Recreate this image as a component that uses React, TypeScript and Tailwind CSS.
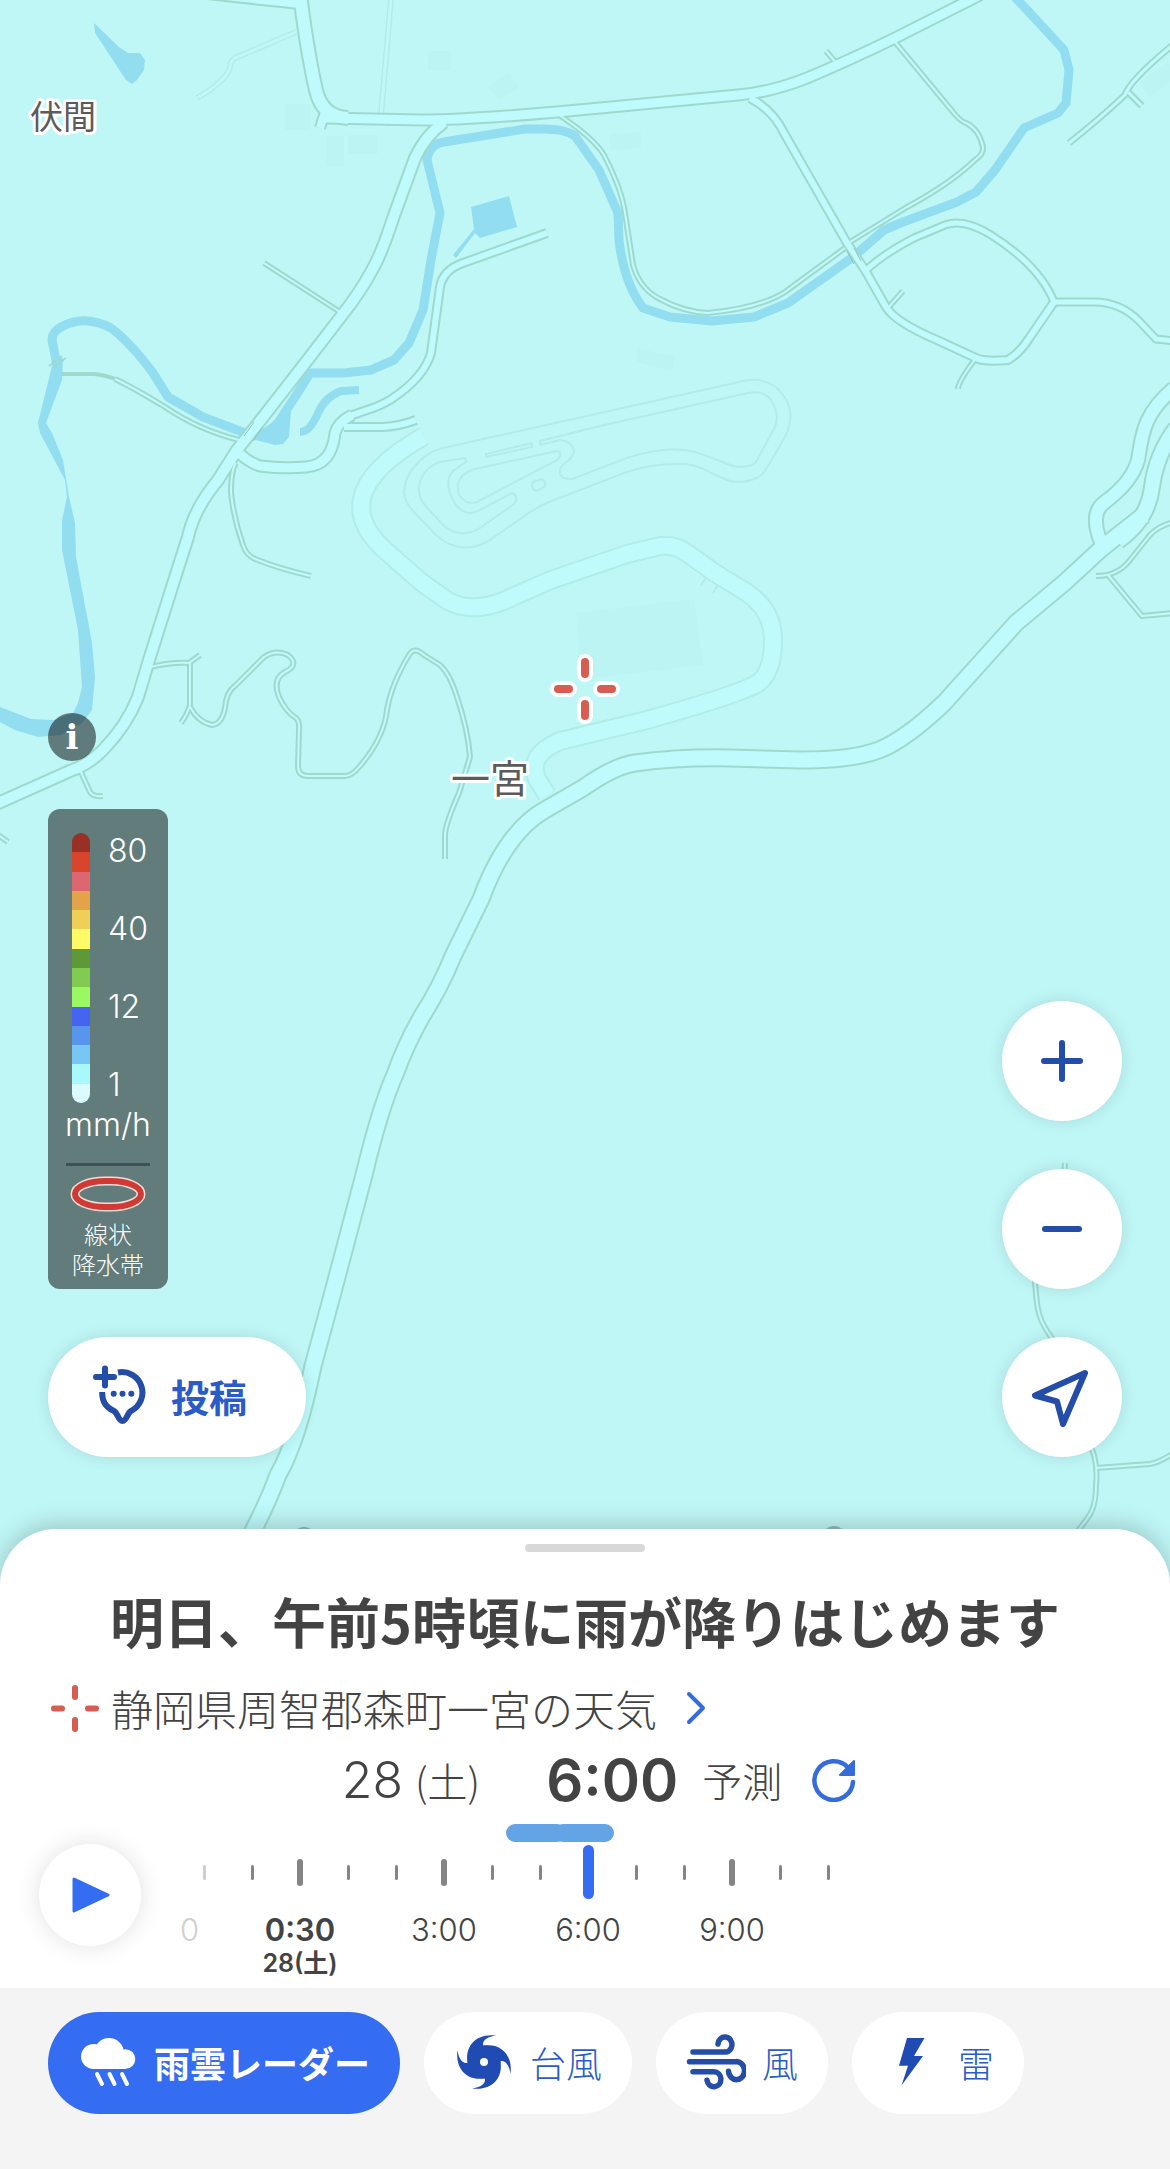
import React, { useState } from 'react';
import clsx from 'clsx';

type Road = { d: string; outer: number; inner: number };

const roads: Road[] = [
  { d: 'M180 -9 L262 0 L300 4', outer: 12, inner: 8 },
  { d: 'M300 -6 C304 26 309 60 316 90 Q322 117 348 118', outer: 16, inner: 12 },
  { d: 'M325 112 L320 128', outer: 12, inner: 8 },
  { d: 'M326 118 L421 120 Q475 120 600 108 L738 95 Q772 92 807 78 Q850 60 895 38 L980 -5', outer: 13, inner: 9 },
  { d: 'M444 122 Q425 136 415 158 L396 210 C388 232 383 252 371 272 Q360 292 346 310 L306 362 L260 421 L237 450 L218 480 Q194 509 188 537 L172 587 L149 660 L138 697 Q127 725 103 750 Q88 765 70 771 L-4 804', outer: 14, inner: 10 },
  { d: 'M547 233 L463 263 Q443 270 440 287 L431 353 Q424 378 390 400 Q380 406 367 410 L344 418', outer: 10, inner: 6 },
  { d: 'M352 415 Q338 422 335 433 Q332 465 306 467 Q283 469 260 466 Q250 463 240 454', outer: 13, inner: 9 },
  { d: 'M344 427 L383 427 Q400 426 416 420', outer: 10, inner: 6 },
  { d: 'M750 98 Q773 110 784 133 L847 243 L865 270 L886 307 Q895 322 937 340 L976 358 Q984 362 1008 360 Q1020 353 1030 337 L1054 302', outer: 10, inner: 6 },
  { d: 'M866 270 Q885 253 914 238 L945 225 Q964 218 991 235 Q1040 266 1054 302 L1094 302 Q1121 302 1140 322 L1156 339 L1174 341', outer: 9, inner: 5 },
  { d: 'M1069 143 Q1096 122 1125 95 Q1130 80 1174 44', outer: 7, inner: 3 },
  { d: 'M1128 92 L1142 106', outer: 7, inner: 3 },
  { d: 'M250 1537 Q268 1502 278 1475 Q298 1440 313 1366 L333 1292 L364 1175 Q380 1108 396 1072 Q406 1044 422 1016 Q440 988 454 954 L481 899 Q505 834 543 811 L583 788 Q614 766 635 763 Q680 757 730 758 L800 760 Q853 760 879 750 Q905 740 944 703 L1016 623 L1064 583 L1102 548 L1144 515', outer: 19, inner: 15 },
  { d: 'M1106 553 C1094 530 1091 512 1105 502 Q1132 482 1138 460 C1142 437 1142 415 1174 388', outer: 16, inner: 12 },
  { d: 'M1118 541 Q1148 520 1152 487 Q1156 455 1176 428', outer: 18, inner: 14 },
];

const lanes: string[] = [
  'M264 263 L340 312',
  'M115 379 Q134 388 165 407 Q199 430 239 440',
  'M236 463 Q231 470 231 493 Q234 520 243 545 Q246 555 255 559 Q280 569 311 576',
  'M556 113 Q593 137 604 155 Q622 190 625 213 L633 265 Q640 290 662 300 Q684 312 708 313 Q760 308 785 292 L845 248',
  'M850 242 L907 207 Q950 184 975 160 Q984 154 983 147 Q979 129 966 123 Q960 121 953 112 L895 42',
  'M888 308 L903 291',
  'M976 358 Q958 382 958 389',
  'M838 65 L826 51',
  'M1096 576 Q1118 576 1130 560 L1150 535 Q1158 526 1174 522',
  'M1108 575 L1142 616 L1174 613',
  'M147 668 Q170 662 189 663 L200 655',
  'M190 663 L190 705 Q187 715 181 723',
  'M190 707 Q198 722 212 725 Q222 724 225 708 Q226 692 236 685 L264 657 Q276 649 288 655 Q300 665 285 672 Q272 679 279 697 Q286 712 296 718 Q300 722 299 730 L298 766 Q298 776 308 776 L345 776 Q352 776 360 766 Q384 738 387 710 Q391 685 409 655 Q414 646 424 655 L440 665 Q450 674 457 697 Q468 730 470 757 L459 793 Q445 825 445 835 L445 859',
  'M80 770 L90 792 Q93 797 103 796',
  'M-3 834 L8 842',
  'M1065 1163 L1064 1180',
  'M1034 1270 L1035 1282 C1037 1308 1037 1320 1055 1342',
  'M1085 1435 L1092 1449 Q1098 1465 1096 1485 C1096 1510 1090 1516 1076 1533',
  'M1096 1468 L1150 1464 Q1158 1463 1174 1453',
];

const faintLanes: string[] = [
  'M296 32 L235 58 Q230 61 230 68 Q225 82 197 98',
  'M391 -2 L386 57 L381 115',
];

const circuitOuter =
  'M424 436 C345 481 350 520 387 552 L421 582 L448 601 Q470 613 501 602 L551 580 L627 554 L660 546 Q675 544 687 553 L715 573 L746 592 Q773 610 773 640 Q773 672 758 683 Q743 693 647 720 L560 741 Q527 755 537 779 L547 795';

const circuitEdges: string[] = [
  'M600 413 L443 448 C420 454 404 475 404 493 Q405 502 413 511 L436 535 Q459 556 487 542 L520 519 Q540 504 562 497 L624 473 Q650 463 685 464 Q697 465 711 473 L727 480 Q742 485 759 477 Q764 474 768 466 L786 435 Q796 412 783 395 Q772 378 748 380z',
  'M600 426 L748 393 Q764 390 771 400 Q780 414 775 427 L757 460 Q754 466 748 466 Q736 469 723 462 L696 452 Q665 445 627 458 L572 479 Q563 480 560 474 Q559 468 564 464 Q574 457 574 451 Q572 441 560 440 L540 445 L540 441z',
  'M465 458 L440 462 C425 467 418 480 419 492 Q420 499 424 504 L443 525 Q460 540 480 528 L514 504 Q520 497 512 493 L478 511 Q466 517 456 505 Q442 483 453 471 L466 462z',
  'M475 469 L557 451 Q564 453 557 460 L477 502 Q467 506 459 495 Q453 476 475 469z',
  'M486 454 L532 443 L532 447 L486 457z',
  'M533 482 L541 479 Q548 482 544 487 L537 491 Q530 489 533 482z',
];

const legendColors = [
  'bg-[#9a3025]', 'bg-[#d8452c]', 'bg-[#dc6770]', 'bg-[#e3a348]', 'bg-[#efcf57]',
  'bg-[#fffb66]', 'bg-[#5d9a37]', 'bg-[#80cb50]', 'bg-[#9bf863]', 'bg-[#4564ef]',
  'bg-[#5896ee]', 'bg-[#78c6f4]', 'bg-[#a9f8fb]', 'bg-[#dcfbfe]',
];

const RadarMap: React.FC = () => (
  <svg
    className="absolute inset-x-0 top-0 h-[calc(100%+61px)] w-full"
    viewBox="0 0 1170 1590"
    preserveAspectRatio="xMidYMin slice"
    fill="none"
    aria-hidden="true"
  >
    <rect x="-600" width="2400" height="1590" fill="#bff7f6" />

    {/* buildings */}
    <g fill="#bbf4f2">
      <path d="M285 104h25v26h-25zM326 136h18v30h-18zM348 135h30v19h-30zM428 51h23v19h-23zM488 87l21-14 10 14-20 13zM610 134l31-2v16l-31 2zM637 348l38 9-3 14-35-9zM1140 82l25-18 5 0v18l-20 15z" />
      <path d="M576 613l118-14 9 66-120 14z" />
    </g>

    {/* water */}
    <g fill="#92ddf0">
      <path d="M94 23L119 47 128 53 140 53 145 60 144 70 137 80 132 84 126 80 95 33z" />
      <path d="M471 207L509 196 517 227 480 238 475 233 456 258 453 255 474 229z" />
      <path d="M54 358L63 358 62 380 46 423 52 433 63 460 69 497 75 523 76 557 92 643 95 677 92 710 82 723 61 735 38 737 15 730 0 722 0 707 31 719 54 720 73 713 78 703 82 687 78 630 62 550 62 520 67 497 65 480 40 433 38 423z" />
      <path d="M250 437L270 424 284 412 291 410 289 437 283 444 275 445z" />
    </g>
    <g stroke="#92ddf0" strokeWidth="9" strokeLinejoin="round">
      <path d="M58 370 L52 340 Q52 332 61 327 Q84 314 111 328 Q130 342 153 373 L168 397 L203 417 L245 433 L275 440" />
      <path d="M1014 -4 L1041 25 L1064 50 L1069 70 L1066 103 L1058 113 L1024 128 L995 170 L976 192 L957 202 L903 222 L884 230 L853 257 L788 303 L754 317 L712 321 L670 317 L643 308 Q624 283 619 240 L618 213 L599 170 L575 136 Q565 129 545 129 L525 129 L444 142 Q429 144 427 160 L440 213 L431 260 L423 310 L409 343 L394 360 L371 370 L344 373 L310 373 L295 397 L272 432" />
      <path d="M359 390 L341 391 Q325 397 318 413 Q310 432 300 432" strokeWidth="8" />
    </g>
    <path d="M49 366L62 356M53 368L66 358" stroke="#9fd9ce" strokeWidth="1.6" />

    {/* circuit */}
    <g stroke="#b2ece9">
      <path d={circuitOuter} strokeWidth="20" />
      {faintLanes.map((d) => (
        <path key={d} d={d} strokeWidth="6" />
      ))}
      <path d="M706 578l-5 7M718 585l-5 8" strokeWidth="2" />
    </g>
    <path d={circuitOuter} strokeWidth="16" stroke="#bffbfb" />
    <g stroke="#bff8f7">
      {faintLanes.map((d) => (
        <path key={d} d={d} strokeWidth="3" />
      ))}
    </g>
    <g stroke="#b2ece9" strokeWidth="2" strokeLinejoin="round">
      {circuitEdges.map((d) => (
        <path key={d} d={d} />
      ))}
    </g>

    {/* roads: casings first so that junctions stay open */}
    <g stroke="#9fd9ce" strokeLinejoin="round">
      <path d="M61 374 L94 374 Q105 375 118 380 L160 405" strokeWidth="4" />
      {lanes.map((d) => (
        <path key={d} d={d} strokeWidth="6" />
      ))}
      {roads.map((r) => (
        <path key={r.d} d={r.d} strokeWidth={r.outer} />
      ))}
    </g>
    <g stroke="#bffbfc" strokeLinejoin="round">
      {lanes.map((d) => (
        <path key={d} d={d} strokeWidth="2" />
      ))}
      {roads.map((r) => (
        <path key={r.d} d={r.d} strokeWidth={r.inner} />
      ))}
    </g>
    <path d="M244 436l10-14M253 441l9-13M847 251l7 13M854 248l7 13" stroke="#8cc4c0" strokeWidth="1" />

    <g fill="#8fbab9">
      <circle cx="304" cy="1538" r="11" />
      <circle cx="834" cy="1538" r="12" />
    </g>

    <g
      fill="#5b5b5b"
      stroke="#fff"
      strokeWidth="6"
      strokeLinejoin="round"
      paintOrder="stroke"
      className="font-['Noto_Sans_CJK_JP',sans-serif]"
    >
      <text x="30" y="129" fontSize="33">伏間</text>
      <text x="451" y="793" fontSize="39">一宮</text>
    </g>

    <g strokeLinecap="round">
      <path d="M585 662v12M585 704v12M558 689h11M601 689h11" stroke="#fff" strokeWidth="16" />
      <path d="M585 662v12M585 704v12M558 689h11M601 689h11" stroke="#d65d50" strokeWidth="8" />
    </g>
  </svg>
);

const PostIcon = () => (
  <svg className="h-[60px] w-[54px]" viewBox="0 0 54 60" fill="none" stroke="#234da6" strokeWidth="6" aria-hidden="true">
    <path d="M12 3.500v17M3 12h18" strokeLinecap="round" />
    <path strokeLinejoin="round" d="M25 7.500 A20.500 20.500 0 0 1 38 46 C34 48 34 56 29.500 56 C25 56 25 48 21 46 C12 42 9 36 9.200 27" />
    <g fill="#234da6" stroke="none">
      <circle cx="20.700" cy="28.700" r="3" />
      <circle cx="29.500" cy="28.700" r="3" />
      <circle cx="38.300" cy="28.700" r="3" />
    </g>
  </svg>
);

const RainIcon = () => (
  <svg className="size-[60px]" viewBox="0 0 60 60" aria-hidden="true">
    <g fill="#fff">
      <circle cx="15.500" cy="24.500" r="12.500" />
      <circle cx="31" cy="21" r="15" />
      <circle cx="47.500" cy="27" r="9.800" />
      <path d="M15 20h33v16.900H15z" />
    </g>
    <path d="M19 42l5 10M31.500 42l5 10M44 42l5 10" stroke="#fff" strokeWidth="4" strokeLinecap="round" />
  </svg>
);

const TyphoonIcon = () => (
  <svg className="size-[60px]" viewBox="0 0 60 60" fill="#1f4bb2" aria-hidden="true">
    <circle cx="30" cy="30" r="16.500" />
    {[0, 90, 180, 270].map((turn) => (
      <path key={turn} transform={`rotate(${turn} 30 30)`} d="M13.500 30 C11 14 22 1 42 3.500 C34 4.500 29 8 29 12 C29 14 30.500 15 32 16 L30 30z" />
    ))}
    <circle cx="30" cy="30" r="4" fill="#fff" />
  </svg>
);

const WindIcon = () => (
  <svg className="size-[60px]" viewBox="0 0 60 60" fill="none" stroke="#234da6" strokeWidth="5.5" strokeLinecap="round" aria-hidden="true">
    <path d="M7 20h31a7 7.500 0 1 0-6-8" />
    <path d="M3.500 29.700h46a8 9 0 1 1-7 9.500" />
    <path d="M7 39.700h21a7 7.500 0 1 1-7 8.500" />
  </svg>
);

const BoltIcon = () => (
  <svg className="size-[60px]" viewBox="0 0 60 60" fill="#1f4bb2" aria-hidden="true">
    <path d="M25 6h17.500L32 24h9L19.500 53.500 26 33.700h-9z" />
  </svg>
);

const layers = [
  { id: 'radar', label: '雨雲レーダー', Icon: RainIcon },
  { id: 'typhoon', label: '台風', Icon: TyphoonIcon },
  { id: 'wind', label: '風', Icon: WindIcon },
  { id: 'thunder', label: '雷', Icon: BoltIcon },
];

const hours = ['0:30', '3:00', '6:00', '9:00'];

const roundButton =
  'flex size-[120px] items-center justify-center rounded-full bg-white shadow-[0_0_16px_rgba(0,0,0,0.12)]';

const Legend = () => (
  <div className="h-[480px] w-[120px] rounded-xl bg-[#617c7a] pt-6 text-white">
    <div className="flex h-[270px] gap-[18px] pl-6">
      <div className="flex w-[18px] flex-col overflow-hidden rounded-full">
        {legendColors.map((color) => (
          <div key={color} className={clsx('flex-1', color)} />
        ))}
      </div>
      <div className="flex flex-col justify-between font-['Inter',sans-serif] text-[32px] leading-9 font-light">
        <span>80</span>
        <span>40</span>
        <span>12</span>
        <span>1</span>
      </div>
    </div>
    <p className="mt-1 text-center font-['Inter',sans-serif] text-[32px] leading-9 font-light">mm/h</p>
    <hr className="mx-[18px] mt-5 border-t-[3px] border-[#3f5251]" />
    <svg className="mx-auto mt-2.5 h-9 w-[76px]" viewBox="0 0 76 36" fill="none" aria-hidden="true">
      <rect x="5" y="5" width="66" height="26" rx="30" ry="13" stroke="#f6dcd9" strokeWidth="9" />
      <rect x="5" y="5" width="66" height="26" rx="30" ry="13" stroke="#cf3a34" strokeWidth="6" />
    </svg>
    <p className="mt-[7px] text-center text-2xl leading-[30px] font-light">
      線状
      <br />
      降水帯
    </p>
  </div>
);

const Timeline = () => {
  const [step, setStep] = useState(8);

  return (
    <div className="relative min-w-0 flex-1">
      <div className="flex h-[18px] pl-[326px]">
        <div className="w-[60px] rounded-full bg-[#62a4e5]" />
        <div className="-ml-3 w-[60px] rounded-full bg-[#62a4e5]" />
      </div>
      <div className="flex h-[60px] items-center">
        {Array.from({ length: 14 }, (_, i) => (
          <div key={i} className="flex w-12 justify-center">
            <div
              className={clsx(
                'rounded-full',
                i === step
                  ? 'h-[54px] w-[11px] bg-[#346cf2]'
                  : i % 3 === 2
                    ? 'h-[27px] w-1.5 bg-[#858585]'
                    : 'h-[15px] w-[3px] bg-[#858585]',
                i === 0 && 'opacity-40'
              )}
            />
          </div>
        ))}
      </div>
      <input
        type="range"
        min={0}
        max={13}
        value={step}
        onChange={(e) => setStep(Number(e.target.value))}
        aria-label="時刻"
        className="absolute top-5 left-0 h-[60px] w-[672px] cursor-pointer opacity-0"
      />
      <div className="mt-2.5 flex font-['Inter',sans-serif] text-[31px] leading-9 font-light text-[#434343]">
        <span className="w-12 text-[#d0d0d0]">0</span>
        {hours.map((hour, i) => (
          <div key={hour} className="w-36 text-center">
            <div className={clsx(i === 0 && 'font-semibold')}>{hour}</div>
            {i === 0 && (
              <div className="font-['Inter','Noto_Sans_CJK_JP',sans-serif] text-[25px] leading-[30px] font-semibold">28(土)</div>
            )}
          </div>
        ))}
      </div>
    </div>
  );
};

const App: React.FC = () => {
  const [layer, setLayer] = useState('radar');

  return (
    <main className="flex min-h-screen flex-col bg-[#f4f4f4] font-['Noto_Sans_CJK_JP',sans-serif] text-[#434343]">
      <section className="relative flex min-h-[1529px] items-end justify-between px-12 pb-[72px]">
        <RadarMap />
        <div className="relative flex flex-col items-start gap-12">
          <button
            type="button"
            aria-label="凡例"
            className="size-12 rounded-full bg-black/50 font-['DejaVu_Serif',serif] text-[34px] leading-[46px] font-bold text-white"
          >
            i
          </button>
          <Legend />
          <button
            type="button"
            className="flex h-[120px] w-[258px] items-center gap-6 rounded-full bg-white pb-1 pl-[45px] text-[38px] font-bold text-[#2a5cc8] shadow-[0_0_16px_rgba(0,0,0,0.12)]"
          >
            <PostIcon />
            投稿
          </button>
        </div>
        <div className="relative flex flex-col gap-12">
          <button type="button" aria-label="拡大" className={roundButton}>
            <svg className="size-[60px]" viewBox="0 0 60 60" stroke="#234da6" strokeWidth="6" strokeLinecap="round">
              <path d="M30 12v36M12 30h36" />
            </svg>
          </button>
          <button type="button" aria-label="縮小" className={roundButton}>
            <svg className="size-[60px]" viewBox="0 0 60 60" stroke="#234da6" strokeWidth="6" strokeLinecap="round">
              <path d="M13 30h34" />
            </svg>
          </button>
          <button type="button" aria-label="現在地" className={roundButton}>
            <svg className="size-[60px]" viewBox="0 0 60 60" fill="none" stroke="#234da6" strokeWidth="6" strokeLinejoin="round">
              <path d="M53 6L3 28.500l22 6L31 57z" />
            </svg>
          </button>
        </div>
      </section>

      <section className="relative flex flex-col rounded-t-[56px] bg-white pb-2.5 shadow-[0_-4px_24px_rgba(0,0,0,0.2)]">
        <div className="mx-auto mt-[15px] h-2 w-[120px] rounded-full bg-[#d8d8d8]" />
        <h1 className="mt-[33px] text-center text-[54px] leading-[72px] font-bold">
          明日、午前5時頃に雨が降りはじめます
        </h1>
        <a href="#weather" className="mt-[27px] flex items-center px-[51px] text-[42px] leading-[48px] font-light">
          <svg className="mr-3 size-12" viewBox="0 0 48 48" stroke="#d65d50" strokeWidth="6" strokeLinecap="round" aria-hidden="true">
            <path d="M24 4v9M24 36v9M3 24.500h8M37 24.500h8" />
          </svg>
          静岡県周智郡森町一宮の天気
          <svg className="ml-7 h-9 w-6" viewBox="0 0 24 36" fill="none" stroke="#346cdc" strokeWidth="4" strokeLinecap="round" strokeLinejoin="round" aria-hidden="true">
            <path d="M4 4l14 14L4 32" />
          </svg>
        </a>
        <div className="mt-[18px] flex h-[60px] items-center justify-center pl-7">
          <span className="font-['Inter',sans-serif] text-[50px] leading-[60px] font-light">28</span>
          <span className="ml-3 text-[40px] leading-[60px] font-light">(土)</span>
          <span className="ml-[66px] font-['Inter',sans-serif] text-[58px] leading-[60px] font-semibold">6:00</span>
          <span className="ml-6 text-[40px] leading-[60px] font-light">予測</span>
          <button type="button" aria-label="更新" className="ml-[30px]">
            <svg className="size-11" viewBox="0 0 44 44" fill="none" stroke="#346cdc" strokeWidth="4.500" aria-hidden="true">
              <path strokeLinecap="round" d="M41 24A19.300 19.300 0 1 1 36 9.500" />
              <path d="M42 3v14H28z" fill="#346cdc" strokeWidth="2" strokeLinejoin="round" />
            </svg>
          </button>
        </div>
        <div className="mt-3.5 flex items-start gap-[39px] pl-[39px]">
          <button
            type="button"
            aria-label="再生"
            className="mt-5 flex size-[102px] shrink-0 items-center justify-center rounded-full bg-white shadow-[0_0_24px_rgba(0,0,0,0.12)]"
          >
            <svg className="h-9 w-[42px]" viewBox="0 0 42 36" aria-hidden="true">
              <path d="M5 2L39 18 5 34z" fill="#346cf2" stroke="#346cf2" strokeWidth="3" strokeLinejoin="round" />
            </svg>
          </button>
          <Timeline />
        </div>
      </section>

      <nav className="relative flex gap-6 bg-[#f4f4f4] px-12 pt-6 pb-[55px]">
        {layers.map(({ id, label, Icon }) => (
          <button
            key={id}
            type="button"
            onClick={() => setLayer(id)}
            className={clsx(
              'flex h-[102px] items-center gap-4 rounded-full px-[30px] pb-0.5 text-4xl whitespace-nowrap',
              id === layer ? 'bg-[#346cf2] font-bold text-white' : 'bg-white font-light text-[#2a5cc8]'
            )}
          >
            <Icon />
            {label}
          </button>
        ))}
      </nav>
    </main>
  );
};

export default App;
